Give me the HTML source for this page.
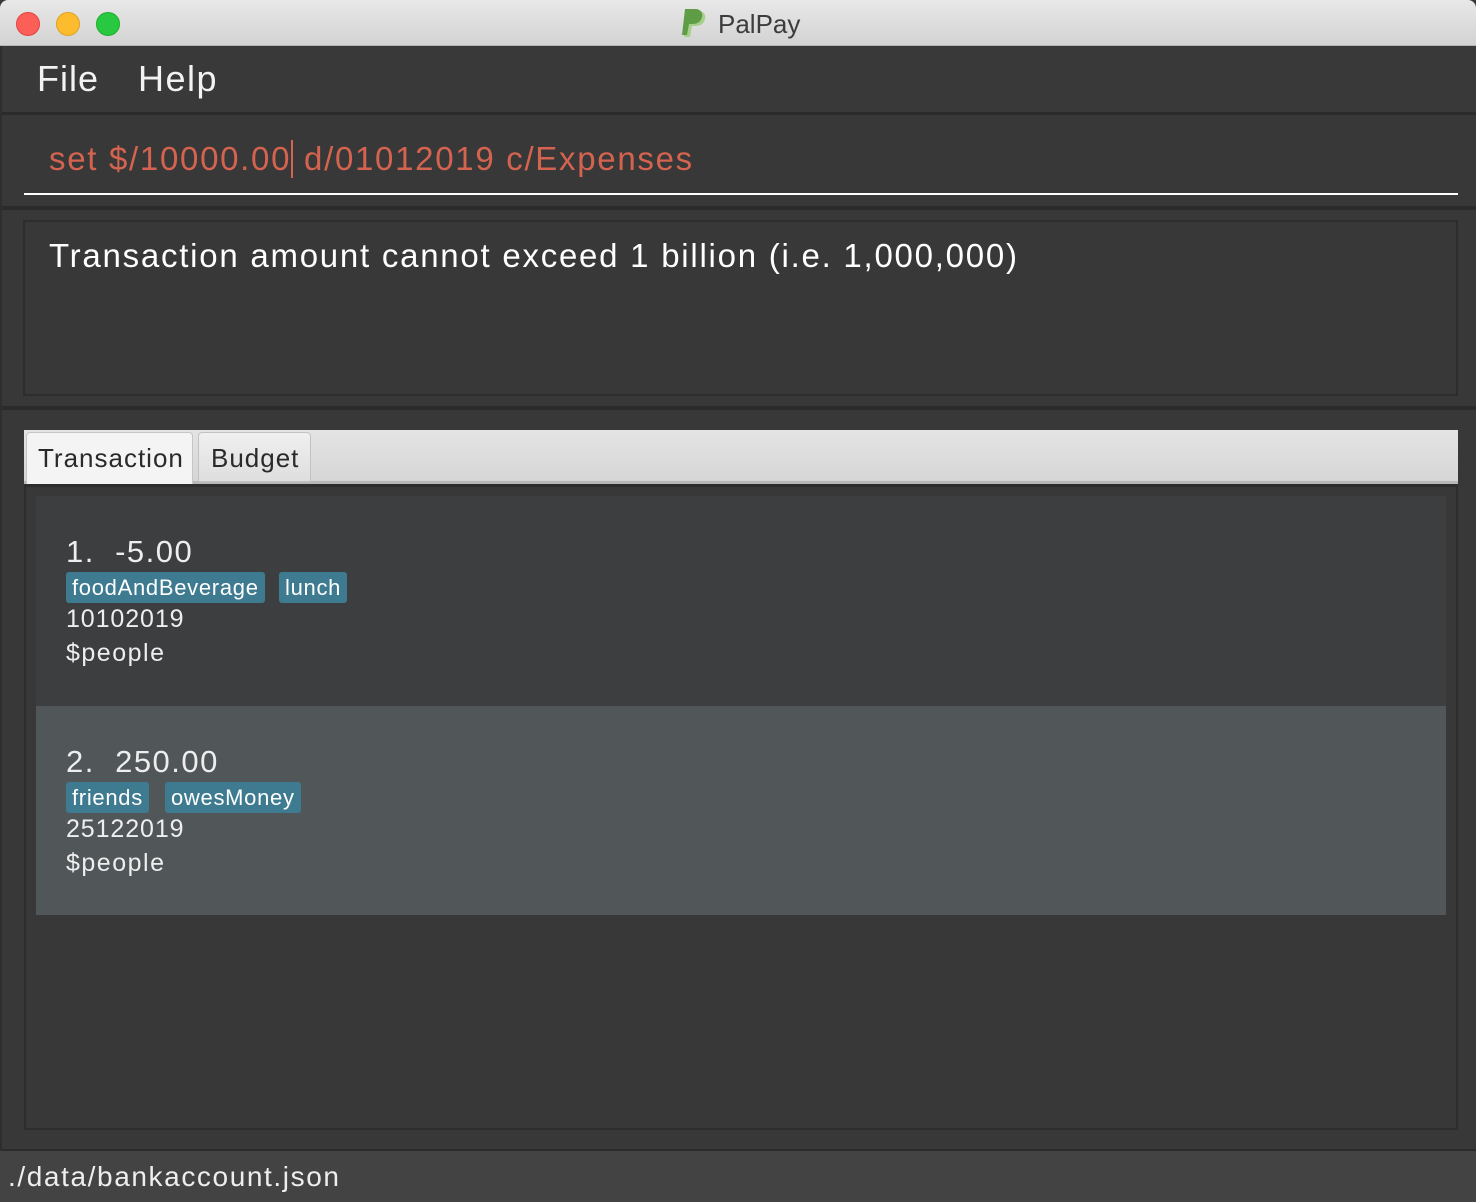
<!DOCTYPE html>
<html><head><meta charset="utf-8"><style>
*{margin:0;padding:0;box-sizing:border-box}
body{width:1476px;height:1202px;background:#383838;font-family:"Liberation Sans",sans-serif;position:relative;overflow:hidden}
.a{position:absolute}
.t{white-space:nowrap}
.tag{height:31px;padding:0 6px;background:#3e7b91;border-radius:3px;font-size:22px;line-height:31px;color:#fff;letter-spacing:0.7px}
</style></head><body>
<div class="a" style="left:0;top:0;width:1476px;height:46px;background:linear-gradient(#e8e8e8,#d3d3d3);border-bottom:1px solid #b5b5b5;border-radius:8px 8px 0 0"></div>
<div class="a" style="left:16px;top:12px;width:24px;height:24px;border-radius:50%;background:#fc5f57;border:1px solid #e0443e"></div>
<div class="a" style="left:56px;top:12px;width:24px;height:24px;border-radius:50%;background:#fdbc2e;border:1px solid #dea123"></div>
<div class="a" style="left:96px;top:12px;width:24px;height:24px;border-radius:50%;background:#28c840;border:1px solid #1dad2b"></div>
<svg class="a" style="left:682px;top:9px" width="26" height="30" viewBox="0 0 26 30"><path d="M6 2h10c6 0 8 4 7 8-1 5-5 7-10 7h-3l-2 11H2z" fill="#a6cf8a"/><path d="M3 0h10c6 0 8 4 7 8-1 5-5 7-10 7H7L5 26H0z" fill="#5e9c46"/></svg>
<div class="a t" style="left:718px;top:9px;font-size:26px;color:#3c3c3c">PalPay</div>
<div class="a" style="left:0;top:46px;width:1476px;height:66px;background:#393939"></div>
<div class="a t" style="left:37px;top:58px;font-size:36px;color:#f2f2f2;letter-spacing:1px">File</div>
<div class="a t" style="left:138px;top:58px;font-size:36px;color:#f2f2f2;letter-spacing:1.5px">Help</div>
<div class="a" style="left:0;top:112px;width:1476px;height:3px;background:#2b2b2b"></div>
<div class="a t" style="left:49px;top:140px;font-size:33px;color:#d4634f;letter-spacing:1.7px">set $/10000.00<span style="display:inline-block;width:2px;height:38px;background:#d4634f;vertical-align:-8px"></span> d/01012019 c/Expenses</div>
<div class="a" style="left:24px;top:193px;width:1434px;height:2px;background:#fff"></div>
<div class="a" style="left:0;top:206px;width:1476px;height:4px;background:#2b2b2b"></div>
<div class="a" style="left:23px;top:220px;width:1435px;height:176px;border:2px solid #2d2d2d"></div>
<div class="a t" style="left:49px;top:237px;font-size:33px;color:#fff;letter-spacing:1.75px">Transaction amount cannot exceed 1 billion (i.e. 1,000,000)</div>
<div class="a" style="left:0;top:406px;width:1476px;height:4px;background:#2b2b2b"></div>
<div class="a" style="left:24px;top:430px;width:1434px;height:54px;background:linear-gradient(#e4e4e4,#d6d6d6);border-bottom:3px solid #b8b8b8"></div>
<div class="a" style="left:26px;top:432px;width:167px;height:52px;background:#f4f4f4;border:1px solid #c6c6c6;border-bottom:none;border-radius:4px 4px 0 0"></div>
<div class="a t" style="left:38px;top:443px;font-size:26px;color:#2a2a2a;letter-spacing:1px">Transaction</div>
<div class="a" style="left:198px;top:432px;width:113px;height:50px;background:linear-gradient(#f0f0f0,#dedede);border:1px solid #c2c2c2;border-radius:4px 4px 0 0"></div>
<div class="a t" style="left:211px;top:443px;font-size:26px;color:#2a2a2a;letter-spacing:1px">Budget</div>
<div class="a" style="left:24px;top:484px;width:1434px;height:646px;border:2px solid #2d2d2d;border-top:3px solid #2d2d2d"></div>
<div class="a" style="left:36px;top:496px;width:1410px;height:210px;background:#3c3e3f"></div>
<div class="a" style="left:36px;top:706px;width:1410px;height:209px;background:#515658"></div>
<div class="a t" style="left:66px;top:534px;font-size:31px;color:#eee;letter-spacing:1.5px">1.&nbsp; -5.00</div>
<div class="a t tag" style="left:66px;top:572px">foodAndBeverage</div>
<div class="a t tag" style="left:279px;top:572px">lunch</div>
<div class="a t" style="left:66px;top:605px;font-size:25px;color:#eee;letter-spacing:0.9px">10102019</div>
<div class="a t" style="left:66px;top:639px;font-size:25px;color:#eee;letter-spacing:1.5px">$people</div>
<div class="a t" style="left:66px;top:744px;font-size:31px;color:#eee;letter-spacing:1.5px">2.&nbsp; 250.00</div>
<div class="a t tag" style="left:66px;top:782px">friends</div>
<div class="a t tag" style="left:165px;top:782px">owesMoney</div>
<div class="a t" style="left:66px;top:815px;font-size:25px;color:#eee;letter-spacing:0.9px">25122019</div>
<div class="a t" style="left:66px;top:849px;font-size:25px;color:#eee;letter-spacing:1.5px">$people</div>
<div class="a" style="left:0;top:1149px;width:1476px;height:2px;background:#2b2b2b"></div>
<div class="a" style="left:0;top:1151px;width:1476px;height:51px;background:#434343"></div>
<div class="a t" style="left:8px;top:1161px;font-size:28px;color:#eee;letter-spacing:1.6px">./data/bankaccount.json</div>
<div class="a" style="left:0;top:46px;width:2px;height:1105px;background:#2e2e2e"></div>
</body></html>
